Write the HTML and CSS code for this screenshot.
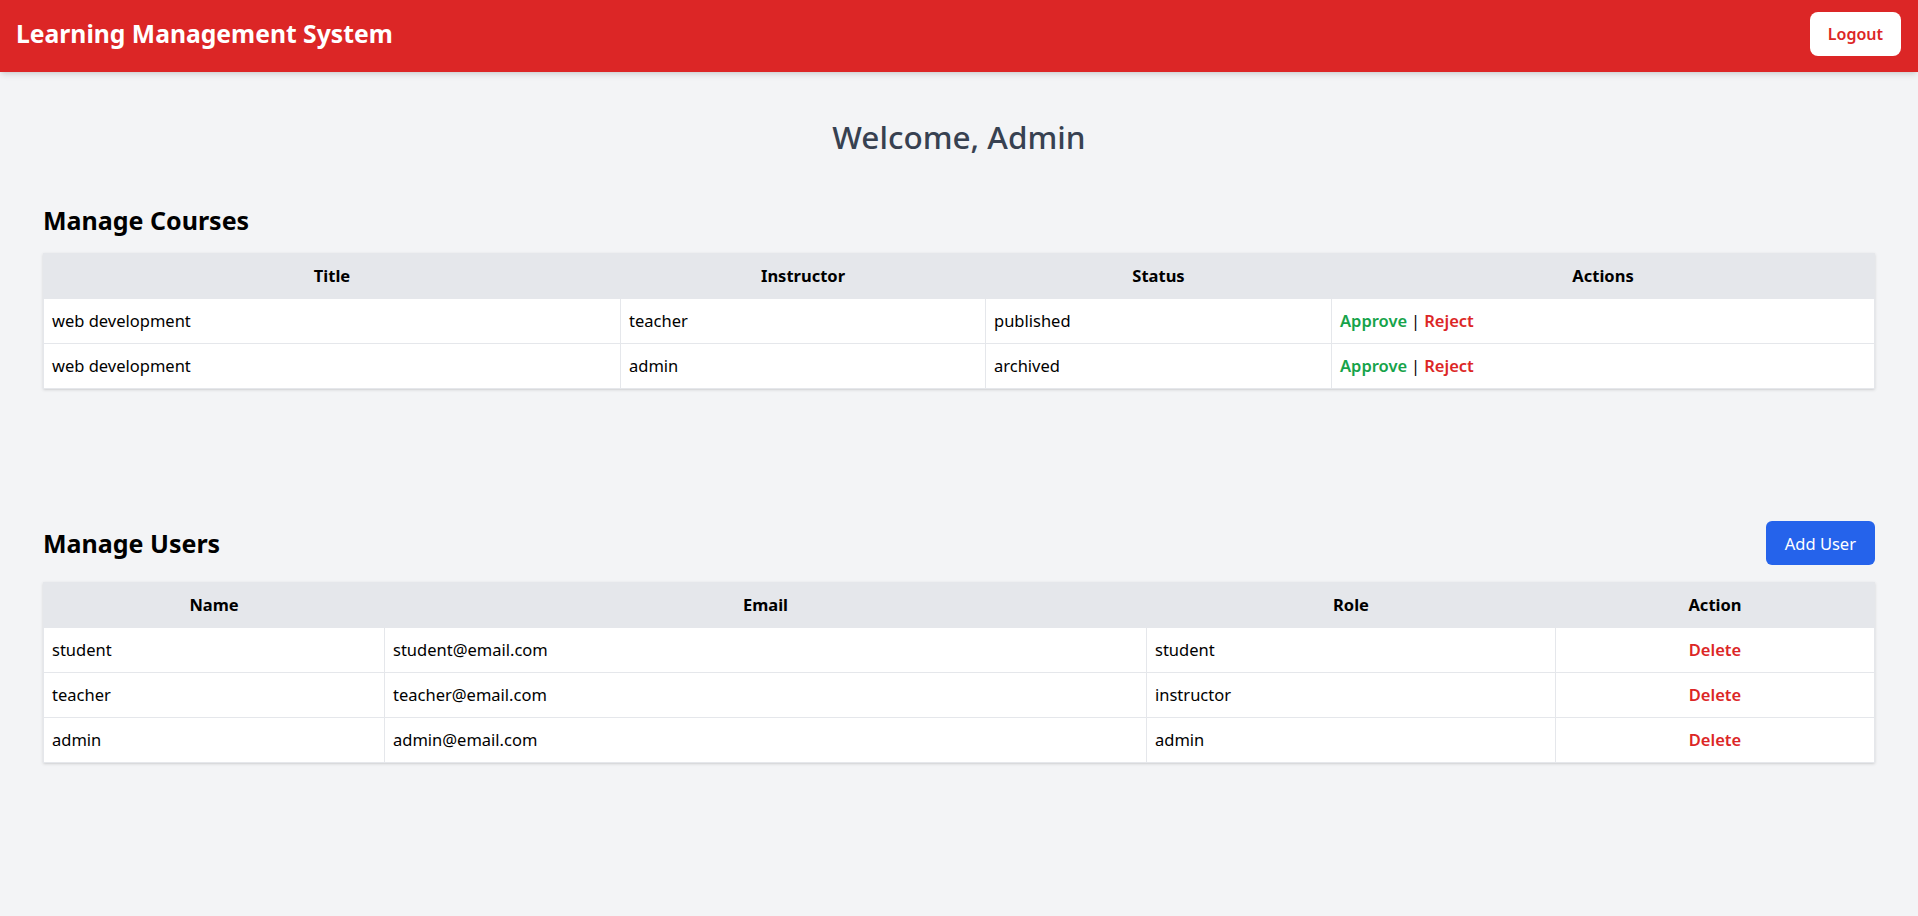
FILE: index.html
```html
<!DOCTYPE html>
<html lang="en">
<head>
<meta charset="utf-8">
<title>Learning Management System</title>
<link rel="stylesheet" href="styles.css">
</head>
<body>
<header class="topbar">
  <div class="brand">Learning Management System</div>
  <button class="logout">Logout</button>
</header>
<main class="main">
  <h1 class="welcome">Welcome, Admin</h1>

  <section class="section courses">
    <div class="section-head">
      <h2 class="section-title">Manage Courses</h2>
    </div>
    <table class="grid">
      <thead>
        <tr>
          <th class="c-title">Title</th>
          <th class="c-instructor">Instructor</th>
          <th class="c-status">Status</th>
          <th class="c-actions">Actions</th>
        </tr>
      </thead>
      <tbody>
        <tr>
          <td>web development</td>
          <td>teacher</td>
          <td>published</td>
          <td><a class="approve">Approve</a><span class="sep">|</span><a class="reject">Reject</a></td>
        </tr>
        <tr>
          <td>web development</td>
          <td>admin</td>
          <td>archived</td>
          <td><a class="approve">Approve</a><span class="sep">|</span><a class="reject">Reject</a></td>
        </tr>
      </tbody>
    </table>
  </section>

  <section class="section users">
    <div class="section-head">
      <h2 class="section-title">Manage Users</h2>
      <button class="add-user">Add User</button>
    </div>
    <table class="grid">
      <thead>
        <tr>
          <th class="u-name">Name</th>
          <th class="u-email">Email</th>
          <th class="u-role">Role</th>
          <th class="u-action">Action</th>
        </tr>
      </thead>
      <tbody>
        <tr>
          <td>student</td>
          <td>student@email.com</td>
          <td>student</td>
          <td class="center"><a class="reject">Delete</a></td>
        </tr>
        <tr>
          <td>teacher</td>
          <td>teacher@email.com</td>
          <td>instructor</td>
          <td class="center"><a class="reject">Delete</a></td>
        </tr>
        <tr>
          <td>admin</td>
          <td>admin@email.com</td>
          <td>admin</td>
          <td class="center"><a class="reject">Delete</a></td>
        </tr>
      </tbody>
    </table>
  </section>
</main>
</body>
</html>
```

FILE: styles.css
```css
* { box-sizing: border-box; }

html, body {
  margin: 0;
  padding: 0;
}

body {
  background: #f3f4f6;
  font-family: "Segoe UI", "Noto Sans", "Open Sans", sans-serif;
  color: #000;
  min-height: 916px;
}

.topbar {
  height: 72px;
  background: #dc2626;
  display: flex;
  align-items: center;
  justify-content: space-between;
  padding: 0 17px 5px 16px;
  box-shadow: 0 4px 6px -1px rgba(0,0,0,0.1), 0 2px 4px -2px rgba(0,0,0,0.1);
}

.brand {
  color: #fff;
  font-size: 24.7px;
  font-weight: 700;
  line-height: 32px;
}

.logout {
  height: 44px;
  padding: 0 18px;
  background: #fff;
  color: #dc2626;
  border: none;
  border-radius: 8px;
  font-family: inherit;
  font-size: 16px;
  font-weight: 600;
}

.main {
  padding: 0 43px;
}

.welcome {
  margin: 47px 0 0;
  text-align: center;
  font-size: 31.5px;
  line-height: 36px;
  font-weight: 500;
  color: #374151;
}

.section-head {
  display: flex;
  align-items: center;
  justify-content: space-between;
  min-height: 32px;
}

.section-title {
  margin: 0;
  font-size: 25px;
  line-height: 32px;
  font-weight: 700;
}

.courses { margin-top: 49px; }
.users { margin-top: 132px; }

.add-user {
  height: 44px;
  padding: 0 19px;
  background: #2563eb;
  color: #fff;
  border: none;
  border-radius: 6px;
  font-family: inherit;
  font-size: 16.5px;
  font-weight: 400;
}

.grid {
  width: 100%;
  margin-top: 17px;
  border-collapse: collapse;
  table-layout: fixed;
  background: #fff;
  box-shadow: 0 1px 3px 0 rgba(0,0,0,0.12), 0 1px 2px -1px rgba(0,0,0,0.1);
}

.grid th,
.grid td {
  border: 1px solid #e5e7eb;
  padding: 10px 8px;
  font-size: 16.5px;
  line-height: 24px;
  text-align: left;
  white-space: nowrap;
}

.grid th {
  background: #e5e7eb;
  font-weight: 700;
  text-align: center;
}

.grid td.center { text-align: center; }

.c-title { width: 577px; }
.c-instructor { width: 365px; }
.c-status { width: 346px; }
.c-actions { width: auto; }

.u-name { width: 341px; }
.u-email { width: 762px; }
.u-role { width: 409px; }
.u-action { width: auto; }

.approve {
  color: #16a34a;
  font-weight: 600;
  cursor: pointer;
}

.reject {
  color: #dc2626;
  font-weight: 600;
  cursor: pointer;
}

.sep {
  color: #000;
  margin: 0 4px;
}
```
